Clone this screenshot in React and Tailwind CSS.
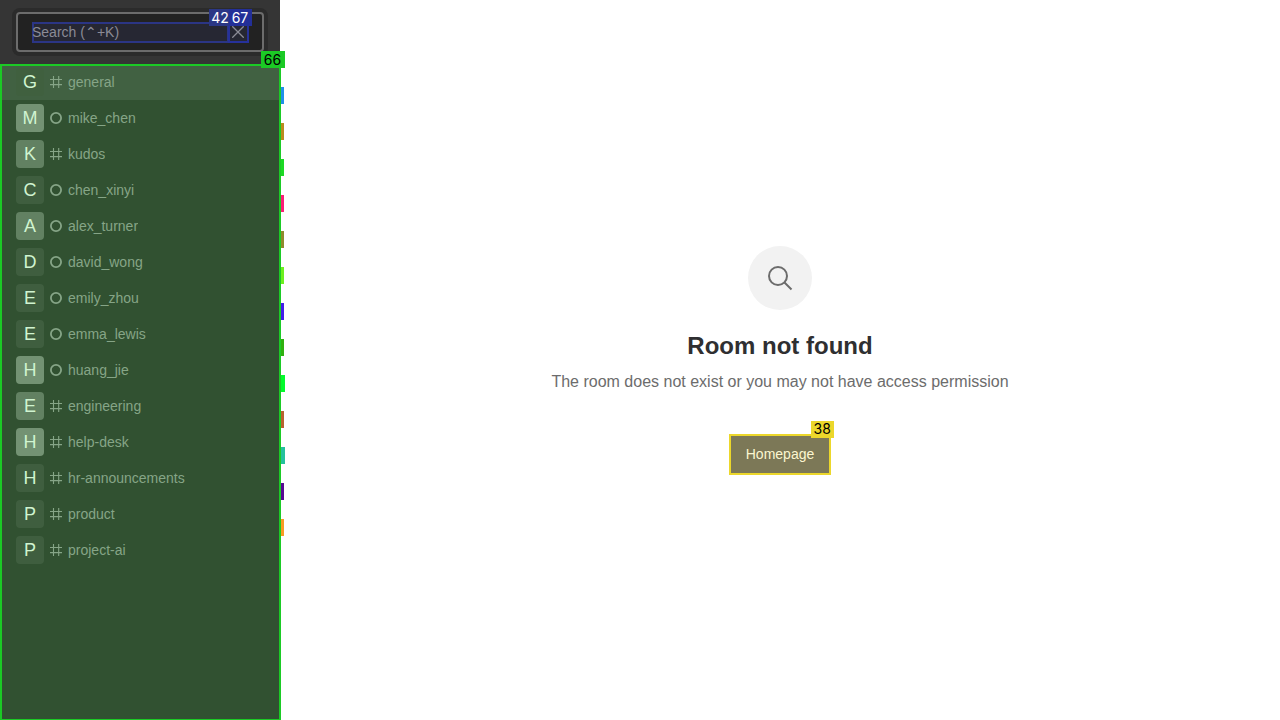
const rooms = [
  { name: 'general', type: 'channel', avatar: 'bg-[#40603f]' },
  { name: 'mike_chen', type: 'user', avatar: 'bg-[#739273]', tag: 'w-[3px] bg-[#2090e8]' },
  { name: 'kudos', type: 'channel', avatar: 'bg-[#628162]', tag: 'w-[3px] bg-[#ba8b1e]' },
  { name: 'chen_xinyi', type: 'user', avatar: 'bg-[#3f5e3f]', tag: 'w-[3px] bg-[#1cd924]' },
  { name: 'alex_turner', type: 'user', avatar: 'bg-[#628162]', tag: 'w-[3px] bg-[#fb1e77]' },
  { name: 'david_wong', type: 'user', avatar: 'bg-[#3f5e3f]', tag: 'w-[3px] bg-[#8f8a2c]' },
  { name: 'emily_zhou', type: 'user', avatar: 'bg-[#3f5e3f]', tag: 'w-[3px] bg-[#6df01f]' },
  { name: 'emma_lewis', type: 'user', avatar: 'bg-[#3f5e3f]', tag: 'w-[3px] bg-[#441fe8]' },
  { name: 'huang_jie', type: 'user', avatar: 'bg-[#739273]', tag: 'w-[3px] bg-[#30b010]' },
  { name: 'engineering', type: 'channel', avatar: 'bg-[#628162]', tag: 'w-1 bg-[#02fb2c]' },
  { name: 'help-desk', type: 'channel', avatar: 'bg-[#739273]', tag: 'w-[3px] bg-[#b8622f]' },
  { name: 'hr-announcements', type: 'channel', avatar: 'bg-[#3f5e3f]', tag: 'w-1 bg-[#25c09c]' },
  { name: 'product', type: 'channel', avatar: 'bg-[#3f5e3f]', tag: 'w-[3px] bg-[#580b92]' },
  { name: 'project-ai', type: 'channel', avatar: 'bg-[#3f5e3f]', tag: 'w-[3px] bg-[#f99b24]' },
];

function RoomIcon({ type }) {
  return (
    <svg className="mx-1.5 size-3 shrink-0" viewBox="0 0 12 12" fill="none" stroke="currentColor" aria-hidden="true">
      {type === 'user' ? (
        <circle cx="6" cy="6" r="5.1" strokeWidth="1.8" />
      ) : (
        <path d="M3.5 0v12M8.7 0v12M0 3.5h12M0 8.6h12" strokeWidth="1.1" />
      )}
    </svg>
  );
}

function Tag({ className, children }) {
  return (
    <span
      className={`absolute z-10 flex h-[17px] items-center justify-center pr-px font-[Inter,sans-serif] text-sm leading-none ${className}`}
    >
      {children}
    </span>
  );
}

function Room({ room, active }) {
  return (
    <li className="relative">
      <a
        href={`#${room.name}`}
        className={`flex h-9 items-center px-3.5 text-sm text-[#86a587] ${active ? 'bg-[#416142]' : ''}`}
      >
        <span className={`flex size-7 shrink-0 items-center justify-center rounded text-lg text-[#d0f4d0] ${room.avatar}`}>
          {room.name[0].toUpperCase()}
        </span>
        <RoomIcon type={room.type} />
        <span className="truncate">{room.name}</span>
      </a>
      {room.tag && <span className={`absolute -top-[13px] left-full ml-0.5 h-[17px] ${room.tag}`} />}
    </li>
  );
}

export default function App() {
  return (
    <div className="flex h-screen bg-white font-['Liberation_Sans',Arial,sans-serif]">
      <aside className="relative -mr-px flex w-[281px] shrink-0 flex-col">
        <div className="mr-px h-16 bg-[#353535] px-4 py-3">
          <div className="relative flex h-10 items-center rounded border-2 border-[#6c6c6c] bg-[#222222] pl-3.5 ring-4 ring-[#2b2b2b]">
            <input
              type="text"
              aria-label="Search"
              placeholder="Search (⌃+K)"
              className="h-[21px] w-[197px] bg-[#262733] text-sm text-[#8b8b96] ring-2 ring-[#2b3585] outline-none ring-inset placeholder:text-[#8b8b96] placeholder:opacity-100"
            />
            <button
              type="button"
              aria-label="Clear search"
              className="-ml-px flex h-[21px] w-[21px] items-center bg-[#262733] pl-1 text-[#8b8b96] ring-2 ring-[#26319a] ring-inset"
            >
              <svg className="size-3 shrink-0" viewBox="0 0 12 12" fill="none" stroke="currentColor" strokeWidth="1.3" aria-hidden="true">
                <path d="M0.3 0.3L11.7 11.7M11.7 0.3L0.3 11.7" />
              </svg>
            </button>
            <Tag className="-top-[5px] right-[30px] w-[23px] bg-[#2b3785] text-white">42</Tag>
            <Tag className="-top-[5px] right-2.5 w-[23px] bg-[#232f98] text-white">67</Tag>
          </div>
        </div>
        <nav aria-label="Rooms" className="relative min-h-0 grow border-2 border-b border-[#1bca25] bg-[#315131]">
          <ul className="-mt-0.5">
            {rooms.map((room, i) => (
              <Room key={room.name} room={room} active={i === 0} />
            ))}
          </ul>
          <span className="absolute inset-x-0 -top-0.5 h-0.5 bg-[#1bca25]" />
          <Tag className="-top-[15px] -right-1.5 w-6 bg-[#1bca25] text-black">66</Tag>
        </nav>
      </aside>
      <main className="flex min-w-0 grow flex-col items-center justify-center px-4 text-center">
        <span className="flex size-16 items-center justify-center rounded-full bg-[#f2f2f2]">
          <svg className="size-8" viewBox="0 0 32 32" fill="none" stroke="#6c6c6c" strokeWidth="2" aria-hidden="true">
            <circle cx="14" cy="14" r="9" />
            <path d="M20.5 20.5L27.5 27.5" />
          </svg>
        </span>
        <h1 className="mt-5 text-2xl leading-8 font-bold text-[#2f2f31]">Room not found</h1>
        <p className="mt-2 text-base text-[#6c6c6c]">The room does not exist or you may not have access permission</p>
        <div className="relative mt-10">
          <button type="button" className="h-[41px] border-2 border-[#ecd72b] bg-[#7c7857] px-[15px] text-sm text-[#fbf6d0]">
            Homepage
          </button>
          <Tag className="-top-[13px] -right-[3px] w-[23px] bg-[#ecd72b] text-black">38</Tag>
        </div>
      </main>
    </div>
  );
}
